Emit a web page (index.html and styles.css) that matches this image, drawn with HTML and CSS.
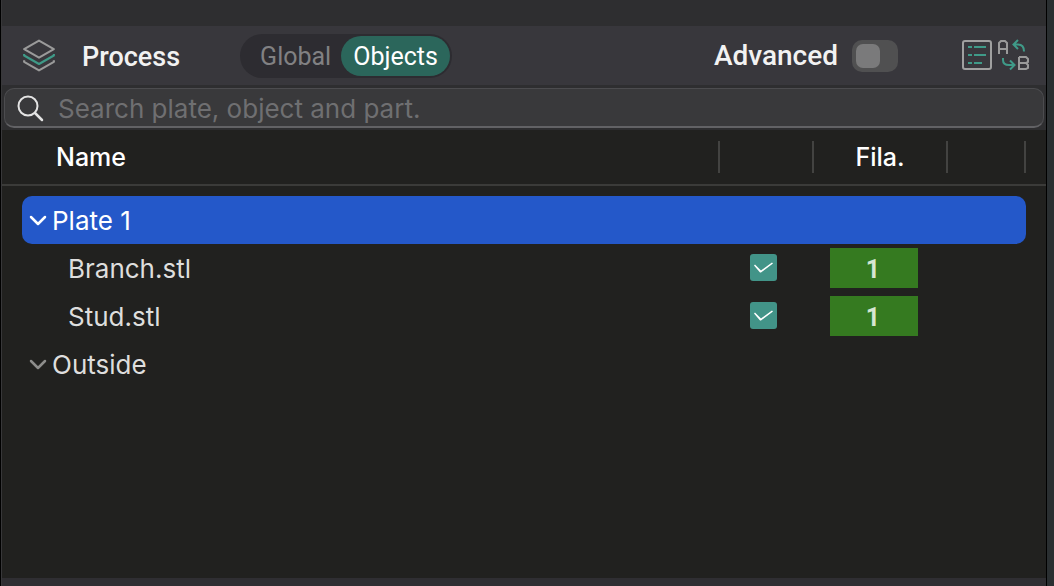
FILE: index.html
```html
<!DOCTYPE html>
<html lang="en">
<head>
<meta charset="utf-8">
<title>Process</title>
<link rel="stylesheet" href="styles.css">
</head>
<body>
<main class="panel">
  <div class="strip"></div>
  <header class="toolbar">
    <svg class="layers" viewBox="0 0 32 32" fill="none" stroke-width="2" stroke-linejoin="round" aria-hidden="true">
      <path d="M16 1.500 30 9.500 16 17.500 2 9.500Z" stroke="#9a9a9a"/>
      <path d="M2 14v1.500l14 8 14-8v-1.500" stroke="#3f9a88"/>
      <path d="M2 20v1.500l14 8 14-8v-1.500" stroke="#9a9a9a"/>
    </svg>
    <h1 class="title">Process</h1>
    <div class="tabs">
      <button class="tab" type="button">Global</button>
      <button class="tab tab-active" type="button">Objects</button>
    </div>
    <label class="advanced">Advanced<input class="switch" type="checkbox" role="switch"></label>
    <div class="tools">
      <button class="tool" type="button" aria-label="Parameter list">
        <svg viewBox="0 0 32 32" fill="none" stroke-width="2" aria-hidden="true">
          <rect x="2" y="2" width="28" height="28" rx="2" stroke="#a0a0a0"/>
          <path d="M7 8h4M13 8h12M7 16h4M13 16h12M7 24h4M13 24h8" stroke="#3f9a88"/>
        </svg>
      </button>
      <button class="tool" type="button" aria-label="Compare presets">
        <svg viewBox="0 0 32 32" fill="none" stroke-width="2" aria-hidden="true">
          <path d="M2 15V4l2-2h4l2 2v11M2 10h8M22 18v13M22 18h7l2 2v3l-2 1h-7M29 24l2 2v3l-2 1h-7" stroke="#9a9a9a"/>
          <path d="M21 1l-4.500 4.500L21 10M17 5.500h4q6 0 6 7M6 19v2q0 5 6 5h5M13 21.500l4.500 4.500-4.500 4.500" stroke="#3f9a88"/>
        </svg>
      </button>
    </div>
  </header>
  <div class="search-area">
    <label class="search">
      <svg class="search-icon" viewBox="0 0 28 28" fill="none" stroke="#e4e4e4" stroke-width="2" stroke-linecap="round" aria-hidden="true">
        <circle cx="12" cy="12" r="9.500"/><path d="M19 19l7 7" stroke-width="2.500"/>
      </svg>
      <input class="search-input" type="search" aria-label="Search" placeholder="Search plate, object and part.">
    </label>
  </div>
  <div class="tree">
    <table class="objects">
      <colgroup><col class="col-edge"><col><col class="col-print"><col class="col-fila"><col class="col-edit"><col class="col-edge"></colgroup>
      <thead>
        <tr>
          <td></td>
          <th scope="col"><div class="head head-name">Name</div></th>
          <td><div class="head"></div></td>
          <th scope="col"><div class="head head-fila">Fila.</div></th>
          <td><div class="head"></div></td>
          <td></td>
        </tr>
      </thead>
      <tbody>
        <tr class="selected">
          <td></td>
          <td class="cell cell-first"><div class="name"><svg class="chevron" viewBox="0 0 18 12" aria-hidden="true"><path d="M2 2l7 7 7-7"/></svg>Plate 1</div></td>
          <td class="cell"></td><td class="cell"></td><td class="cell cell-last"></td><td></td>
        </tr>
        <tr>
          <td></td>
          <td><div class="name name-child">Branch.stl</div></td>
          <td><input class="check" type="checkbox" checked aria-label="Print Branch.stl"></td>
          <td><button class="filament" type="button">1</button></td>
          <td></td><td></td>
        </tr>
        <tr>
          <td></td>
          <td><div class="name name-child">Stud.stl</div></td>
          <td><input class="check" type="checkbox" checked aria-label="Print Stud.stl"></td>
          <td><button class="filament" type="button">1</button></td>
          <td></td><td></td>
        </tr>
        <tr>
          <td></td>
          <td><div class="name"><svg class="chevron" viewBox="0 0 18 12" aria-hidden="true"><path d="M2 2l7 7 7-7"/></svg>Outside</div></td>
          <td></td><td></td><td></td><td></td>
        </tr>
      </tbody>
    </table>
  </div>
  <div class="foot"></div>
</main>
</body>
</html>
```

FILE: styles.css
```css
* { box-sizing: border-box; }

body {
  margin: 0;
  min-height: 100vh;
  display: flex;
  background: #2a2f31;
  border-left: 1px solid #000;
  padding-right: 7px;
  font-family: Inter, "Liberation Sans", sans-serif;
  color: #dededd;
}

button, input {
  font: inherit;
  color: inherit;
  margin: 0;
  padding: 0;
  border: 0;
}

.panel {
  flex: 1;
  min-width: 0;
  display: flex;
  flex-direction: column;
  background: #21211f;
  border-left: 1px solid #38383a;
  border-right: 1px solid #000;
}

.strip {
  height: 26px;
  background: #2e2e30;
}

.toolbar {
  display: flex;
  align-items: center;
  height: 59px;
  padding: 0 17px 0 20px;
  background: #38373c;
  font-family: Roboto, sans-serif;
  font-size: 25px;
  line-height: 32px;
  color: #f2f2f2;
}

.layers {
  width: 34px;
  height: 34px;
}

.title {
  margin: 0 0 0 26px;
  padding-top: 2px;
  font-size: 27px;
  font-weight: 500;
}

.tabs {
  display: flex;
  margin-left: 60px;
  padding: 2px;
  border-radius: 22px;
  background: #2d2c31;
}

.tab {
  height: 40px;
  padding: 2px 12px 0;
  border-radius: 20px;
  background: transparent;
  color: #818183;
}

.tab:first-child {
  padding-left: 18px;
  padding-right: 10px;
}

.tab-active {
  background: #2b665b;
  color: #fff;
}

.advanced {
  display: flex;
  align-items: center;
  gap: 14px;
  margin-left: auto;
  font-size: 28px;
  font-weight: 500;
}

.switch {
  appearance: none;
  display: flex;
  align-items: center;
  width: 46px;
  height: 32px;
  padding: 0 4px;
  border-radius: 10px;
  background: #505051;
}

.switch::before {
  content: "";
  width: 24px;
  height: 24px;
  border-radius: 7px;
  background: #7a7a7b;
}

.tools {
  display: flex;
  gap: 4px;
  margin-left: 63px;
  padding-bottom: 2px;
}

.tool {
  width: 32px;
  height: 32px;
  background: transparent;
}

.tool svg { display: block; }

.search-area {
  padding: 3px 2px 2px;
  background: #2e2e30;
}

.search {
  display: flex;
  align-items: center;
  gap: 14px;
  height: 40px;
  padding: 0 11px;
  border: 1px solid #4c4c4f;
  border-bottom: 2px solid #626265;
  border-radius: 10px;
  background: #39393b;
}

.search-icon {
  width: 28px;
  height: 28px;
}

.search-input {
  flex: 1;
  min-width: 0;
  padding-top: 2px;
  background: transparent;
  font-size: 26px;
  line-height: 32px;
  outline: 0;
}

.search-input::placeholder {
  color: #6f6f71;
  opacity: 1;
}

.tree {
  flex: 1;
}

.objects {
  width: 100%;
  table-layout: fixed;
  border-spacing: 0;
  font-size: 26px;
  line-height: 32px;
}

.objects td, .objects th { padding: 0; }

.col-edge { width: 20px; }
.col-print { width: 94px; }
.col-fila { width: 134px; }
.col-edit { width: 78px; }

.objects thead td, .objects thead th {
  height: 56px;
  border-bottom: 2px solid #3b3b39;
}

.head {
  height: 32px;
  border-right: 2px solid #434341;
  font-size: 25px;
  font-weight: 500;
  color: #fff;
}

.head-name {
  padding-left: 34px;
  text-align: left;
}

.objects tbody::before {
  content: "";
  display: block;
  height: 10px;
}

.objects tbody tr { height: 48px; }

.cell { background: #2458c9; }
.cell-first { border-radius: 10px 0 0 10px; }
.cell-last { border-radius: 0 10px 10px 0; }

.selected { color: #fff; }

.name {
  display: flex;
  align-items: center;
  gap: 5px;
  padding-top: 2px;
  padding-left: 7px;
}

.name-child { padding-left: 46px; }

.chevron {
  width: 18px;
  height: 12px;
  fill: none;
  stroke: #8d8d8b;
  stroke-width: 2.5;
  stroke-linecap: round;
  stroke-linejoin: round;
}

.selected .chevron { stroke: #fff; }

.check {
  appearance: none;
  display: block;
  width: 27px;
  height: 27px;
  margin-left: 30px;
  margin-bottom: 2px;
  border-radius: 3px;
  background: #429488;
}

.check:checked::before {
  content: "";
  display: block;
  height: 27px;
  background: #fff;
  clip-path: polygon(4px 12px, 5px 11px, 11px 17px, 22px 9px, 23px 10px, 11px 19px, 10px 19px);
}

.filament {
  display: block;
  width: 88px;
  height: 40px;
  margin-left: 16px;
  padding: 3px 2px 0 0;
  background: #357a20;
  color: #d6e6d2;
  font-family: Roboto, sans-serif;
  font-size: 25px;
  font-weight: 700;
}

.foot {
  height: 8px;
  background: #2f2e32;
}
```
